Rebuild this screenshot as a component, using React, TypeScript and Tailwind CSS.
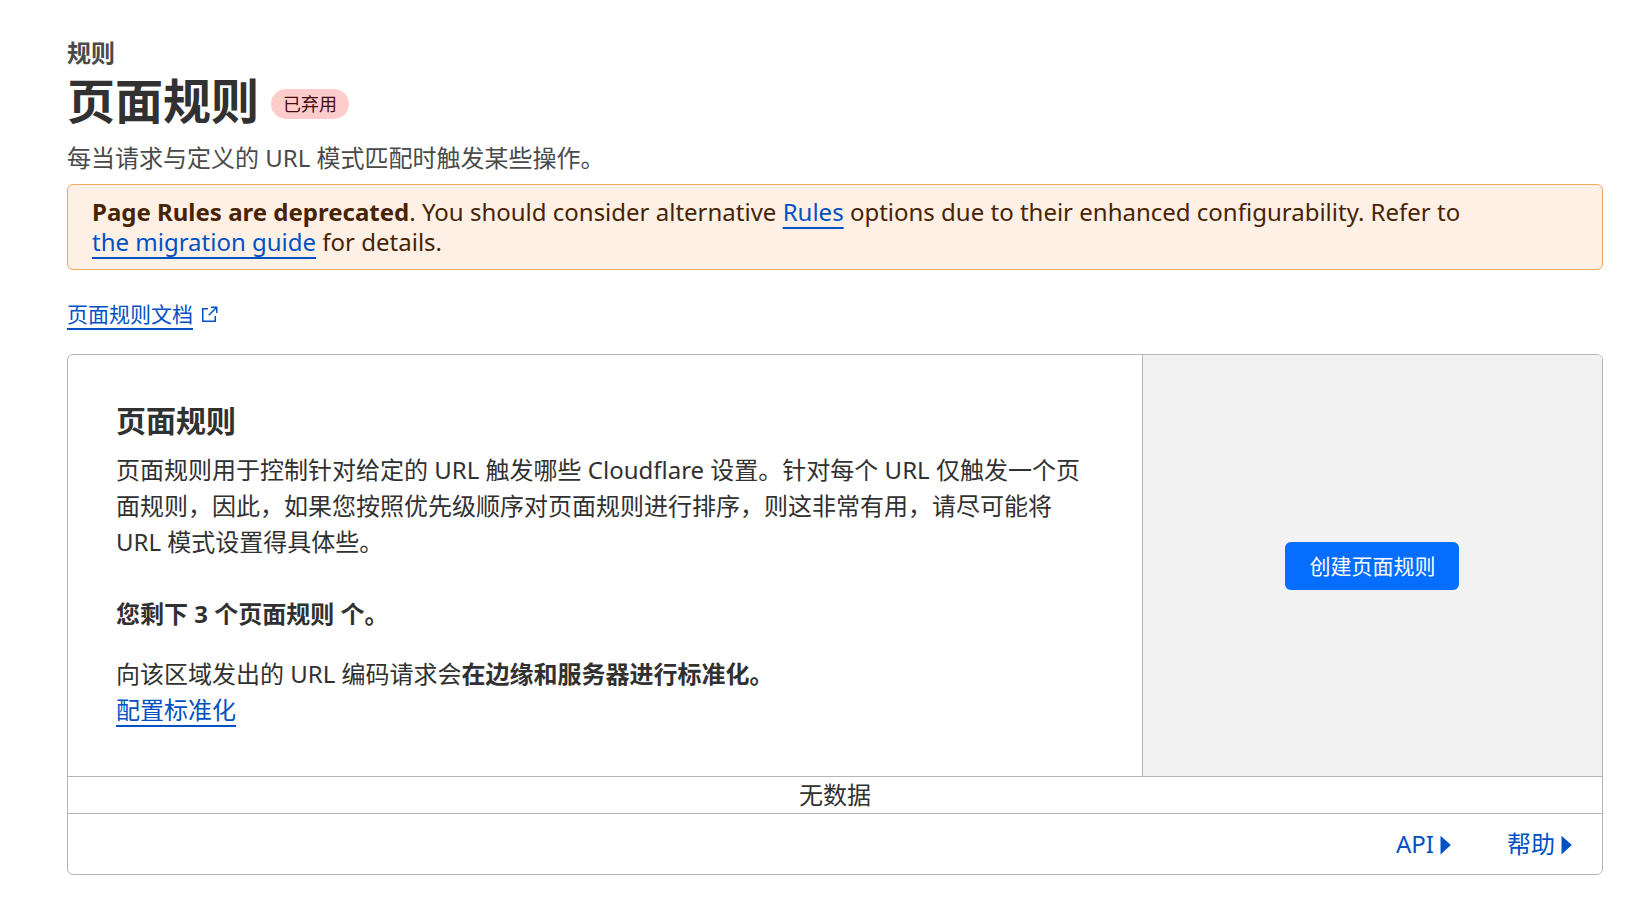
import type { ReactNode } from "react";

function TextLink({ children }: { children: ReactNode }) {
  return (
    <a href="#" className="whitespace-nowrap text-[#0051c3] underline decoration-2 underline-offset-[6px]">
      {children}
    </a>
  );
}

function ExternalIcon() {
  return (
    <svg width="17" height="17" viewBox="0 0 17 17" fill="none" stroke="#0051c3" strokeWidth="1.5" aria-hidden="true">
      <path d="M7 2.75H1.75v12.5h12.5V10" />
      <path d="M10 1.25h5.75V7M15.5 1.5L7.75 9.25" />
    </svg>
  );
}

function Disclosure({ label }: { label: string }) {
  return (
    <button type="button" className="flex items-center gap-1.5 text-[#0051c3]">
      {label}
      <svg className="mt-0.5" width="11" height="20" viewBox="0 0 11 20" fill="#0051c3" aria-hidden="true">
        <path d="M0.5 0.8L10.3 9.6Q10.8 10 10.3 10.4L0.5 19.4Z" />
      </svg>
    </button>
  );
}

export default function App() {
  return (
    <main className="pt-[35px] pr-[39px] pb-7 pl-[67px] font-['Noto_Sans','Noto_Sans_CJK_SC',sans-serif] text-2xl leading-9 text-[#313131]">
      <header className="mb-2">
        <p className="font-bold text-[#4a4a4a]">规则</p>
        <div className="flex items-end gap-3">
          <h1 className="text-5xl leading-[60px] font-bold">页面规则</h1>
          <span className="mb-3 rounded-full bg-[#ffcccc] px-3 text-lg leading-[30px] text-[#430c0c]">已弃用</span>
        </div>
        <p className="mt-[9px] text-[#4a4a4a]">每当请求与定义的 URL 模式匹配时触发某些操作。</p>
      </header>

      <div className="rounded-md border border-[#f0a860] bg-[#fef0e5] px-6 py-3 leading-[30px] text-[#482303]">
        <strong>Page Rules are deprecated</strong>. You should consider alternative <TextLink>Rules</TextLink> options
        due to their enhanced configurability. Refer to <TextLink>the migration guide</TextLink> for details.
      </div>

      <div className="mt-7 mb-6 flex items-center gap-2 text-[21px] leading-8">
        <TextLink>页面规则文档</TextLink>
        <ExternalIcon />
      </div>

      <section className="overflow-hidden rounded-md border border-[#b6b6b6]">
        <div className="grid grid-cols-[7fr_3fr]">
          <div className="p-12">
            <h2 className="mb-[13px] text-3xl leading-9 font-bold">页面规则</h2>
            <p>
              页面规则用于控制针对给定的 URL 触发哪些 Cloudflare 设置。针对每个 URL
              仅触发一个页面规则，因此，如果您按照优先级顺序对页面规则进行排序，则这非常有用，请尽可能将 URL
              模式设置得具体些。
            </p>
            <p className="mt-9 font-bold">您剩下 3 个页面规则 个。</p>
            <p className="mt-6">
              向该区域发出的 URL 编码请求会<strong>在边缘和服务器进行标准化。</strong>
            </p>
            <TextLink>配置标准化</TextLink>
          </div>
          <div className="flex items-center justify-center border-l border-[#b6b6b6] bg-[#f2f2f2]">
            <button type="button" className="rounded-md bg-[#056dff] px-6 py-2 text-[21px] leading-8 text-white">
              创建页面规则
            </button>
          </div>
        </div>
        <div className="border-t border-[#b6b6b6] text-center">无数据</div>
        <div className="flex justify-end gap-14 border-t border-[#b6b6b6] px-[30px] py-3">
          <Disclosure label="API" />
          <Disclosure label="帮助" />
        </div>
      </section>
    </main>
  );
}
